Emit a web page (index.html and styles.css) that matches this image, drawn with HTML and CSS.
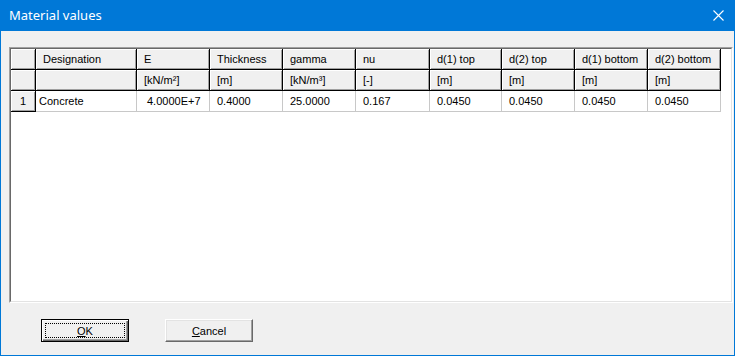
FILE: index.html
```html
<!DOCTYPE html>
<html lang="en">
<head>
  <meta charset="UTF-8" />
  <title>Material values</title>
  <link rel="stylesheet" href="styles.css">
</head>
<body>
  <div class="window">
    <div class="titlebar">
      <span class="title">Material values</span>
      <svg class="close" width="11" height="11" viewBox="0 0 11 11">
        <path d="M0.5 0.5 L10.5 10.5 M10.5 0.5 L0.5 10.5" stroke="#ffffff" stroke-width="1.1" fill="none" />
      </svg>
    </div>

    <div class="content">
      <div class="panel">
        <div class="panel-inner">
          <div class="grid">
            <div class="hd"></div>
            <div class="hd">Designation</div>
            <div class="hd">E</div>
            <div class="hd">Thickness</div>
            <div class="hd">gamma</div>
            <div class="hd">nu</div>
            <div class="hd">d(1) top</div>
            <div class="hd">d(2) top</div>
            <div class="hd">d(1) bottom</div>
            <div class="hd">d(2) bottom</div>

            <div class="hd"></div>
            <div class="hd"></div>
            <div class="hd">[kN/m²]</div>
            <div class="hd">[m]</div>
            <div class="hd">[kN/m³]</div>
            <div class="hd">[-]</div>
            <div class="hd">[m]</div>
            <div class="hd">[m]</div>
            <div class="hd">[m]</div>
            <div class="hd">[m]</div>

            <div class="hd num">1</div>
            <div class="cell name">Concrete</div>
            <div class="cell wide">4.0000E+7</div>
            <div class="cell">0.4000</div>
            <div class="cell">25.0000</div>
            <div class="cell">0.167</div>
            <div class="cell">0.0450</div>
            <div class="cell">0.0450</div>
            <div class="cell">0.0450</div>
            <div class="cell">0.0450</div>
          </div>
        </div>
      </div>

      <div class="buttons">
        <button class="btn default"><span class="focus"><u>O</u>K</span></button>
        <button class="btn"><span class="focus"><u>C</u>ancel</span></button>
      </div>
    </div>
  </div>
</body>
</html>
```

FILE: styles.css
```css
html, body {
  margin: 0;
  padding: 0;
  background: #f0f0f0;
}
.window {
  width: 735px;
  height: 356px;
  box-sizing: border-box;
  border: 1px solid #0078d7;
  border-top: none;
  background: #f0f0f0;
  display: flex;
  flex-direction: column;
  font-family: "Liberation Sans", Arial, sans-serif;
  font-size: 11px;
  color: #000;
}
.titlebar {
  height: 31px;
  flex: none;
  background: #0078d7;
  display: flex;
  align-items: center;
  justify-content: space-between;
  padding: 0 10px 0 8px;
  box-sizing: border-box;
}
.title {
  font-family: "Noto Sans", "Open Sans", sans-serif;
  font-size: 13px;
  color: #ffffff;
  margin-top: -1px;
}
.close {
  display: block;
  margin-top: -1px;
}
.content {
  flex: 1;
  display: flex;
  flex-direction: column;
  padding: 16px 1px 0 8px;
}
.panel {
  height: 256px;
  box-sizing: border-box;
  border: 1px solid;
  border-color: #a0a0a0 #ffffff #ffffff #a0a0a0;
}
.panel-inner {
  height: 100%;
  box-sizing: border-box;
  border: 1px solid;
  border-color: #696969 #e3e3e3 #e3e3e3 #696969;
  background: #ffffff;
}
.grid {
  display: grid;
  grid-template-columns: 25px 101px 73px 73px 73px 74px 72px 73px 73px 73px;
  grid-auto-rows: 21px;
  width: max-content;
}
.hd, .cell {
  box-sizing: border-box;
  display: flex;
  align-items: center;
  padding: 0 0 1px 7px;
  white-space: nowrap;
}
.hd {
  background: #f0f0f0;
  border-right: 1px solid #000;
  border-bottom: 1px solid #000;
  box-shadow: inset 1px 1px #ffffff, inset -1px -1px #a0a0a0;
}
.hd.num {
  justify-content: center;
  padding-left: 0;
}
.cell {
  background: #ffffff;
  border-right: 1px solid #c8c8c8;
  border-bottom: 1px solid #c8c8c8;
}
.cell.name {
  padding-left: 3px;
}
.cell.wide {
  padding-left: 10px;
}
.buttons {
  display: flex;
  gap: 36px;
  margin-top: 16px;
  padding-left: 32px;
}
.btn {
  width: 88px;
  height: 23px;
  padding: 0;
  margin: 0;
  box-sizing: border-box;
  background: #f0f0f0;
  font-family: "Liberation Sans", Arial, sans-serif;
  font-size: 11px;
  color: #000;
  border: 1px solid;
  border-color: #ffffff #696969 #696969 #ffffff;
  box-shadow: inset -1px -1px #a0a0a0, inset 1px 1px #e3e3e3;
  display: flex;
  align-items: stretch;
}
.btn.default {
  border-color: #000;
  box-shadow: inset 1px 1px #ffffff, inset -1px -1px #696969, inset -2px -2px #a0a0a0;
}
.focus {
  flex: 1;
  display: flex;
  align-items: center;
  justify-content: center;
  margin: 3px;
  border: 1px solid transparent;
}
.btn.default .focus {
  border: 1px dotted #000;
}
```
